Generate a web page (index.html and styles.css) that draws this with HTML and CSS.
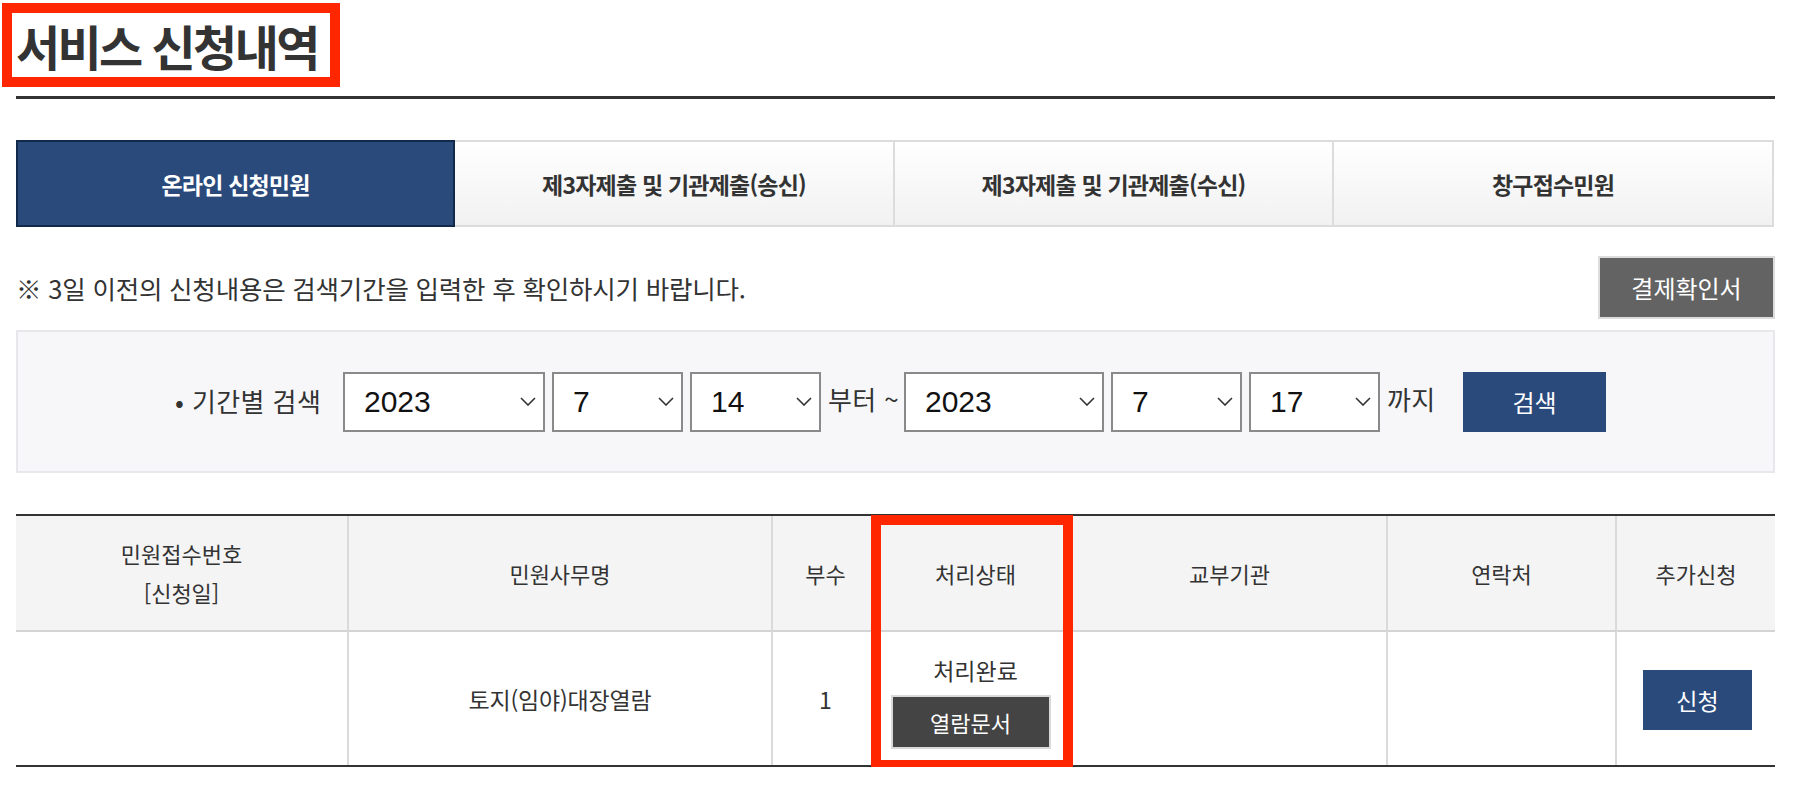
FILE: index.html
```html
<!DOCTYPE html>
<html lang="ko">
<head>
<meta charset="utf-8">
<title>서비스 신청내역</title>
<link rel="stylesheet" href="styles.css">
</head>
<body>
<div class="page">
  <header class="page-head">
    <h1 class="title">서비스 신청내역</h1>
  </header>

  <nav class="tabs">
    <a class="tab active">온라인 신청민원</a>
    <a class="tab">제3자제출 및 기관제출(송신)</a>
    <a class="tab">제3자제출 및 기관제출(수신)</a>
    <a class="tab">창구접수민원</a>
  </nav>

  <div class="notice-row">
    <p class="notice">※ 3일 이전의 신청내용은 검색기간을 입력한 후 확인하시기 바랍니다.</p>
    <button class="btn btn-gray">결제확인서</button>
  </div>

  <div class="search-box">
    <span class="search-label">• 기간별 검색</span>
    <div class="sel sel-year"><span class="sel-val">2023</span><svg class="chev" width="16" height="9" viewBox="0 0 16 9"><path d="M1 1 L8 8 L15 1" fill="none" stroke="#333" stroke-width="1.6"/></svg></div>
    <div class="sel sel-md"><span class="sel-val">7</span><svg class="chev" width="16" height="9" viewBox="0 0 16 9"><path d="M1 1 L8 8 L15 1" fill="none" stroke="#333" stroke-width="1.6"/></svg></div>
    <div class="sel sel-md"><span class="sel-val">14</span><svg class="chev" width="16" height="9" viewBox="0 0 16 9"><path d="M1 1 L8 8 L15 1" fill="none" stroke="#333" stroke-width="1.6"/></svg></div>
    <span class="search-text">부터 ~</span>
    <div class="sel sel-year2"><span class="sel-val">2023</span><svg class="chev" width="16" height="9" viewBox="0 0 16 9"><path d="M1 1 L8 8 L15 1" fill="none" stroke="#333" stroke-width="1.6"/></svg></div>
    <div class="sel sel-md"><span class="sel-val">7</span><svg class="chev" width="16" height="9" viewBox="0 0 16 9"><path d="M1 1 L8 8 L15 1" fill="none" stroke="#333" stroke-width="1.6"/></svg></div>
    <div class="sel sel-md"><span class="sel-val">17</span><svg class="chev" width="16" height="9" viewBox="0 0 16 9"><path d="M1 1 L8 8 L15 1" fill="none" stroke="#333" stroke-width="1.6"/></svg></div>
    <span class="search-text">까지</span>
    <button class="btn btn-navy btn-search">검색</button>
  </div>

  <div class="table-wrap">
    <table class="list">
      <colgroup>
        <col class="c1"><col class="c2"><col class="c3"><col class="c4"><col class="c5"><col class="c6"><col class="c7">
      </colgroup>
      <thead>
        <tr>
          <th>민원접수번호<br>[신청일]</th>
          <th>민원사무명</th>
          <th>부수</th>
          <th>처리상태</th>
          <th>교부기관</th>
          <th>연락처</th>
          <th>추가신청</th>
        </tr>
      </thead>
      <tbody>
        <tr>
          <td></td>
          <td class="name">토지(임야)대장열람</td>
          <td>1</td>
          <td>
            <div class="status">처리완료</div>
            <button class="btn btn-dark">열람문서</button>
          </td>
          <td></td>
          <td></td>
          <td><button class="btn btn-navy btn-apply">신청</button></td>
        </tr>
      </tbody>
    </table>
    <div class="highlight"></div>
  </div>
</div>
</body>
</html>
```

FILE: styles.css
```css
* { box-sizing: border-box; }

html, body {
  margin: 0;
  background: #fff;
}

body {
  font-family: "Noto Sans CJK KR", "Noto Sans", sans-serif;
  color: #333;
}

.page {
  width: 1796px;
  padding: 3px 21px 0 16px;
}

/* ---------- title ---------- */
.page-head {
  display: flex;
  padding-bottom: 9px;
  border-bottom: 3px solid #333;
}

.title {
  margin: 0 0 0 -14px;
  border: 10px solid #ff2600;
  padding: 0 12px 0 4px;
  font-size: 48px;
  font-weight: 700;
  line-height: 64px;
  letter-spacing: -2.6px;
  color: #333;
  white-space: nowrap;
}

/* ---------- tabs ---------- */
.tabs {
  display: grid;
  grid-template-columns: 439px 440px 439px 440px;
  margin-top: 41px;
  height: 87px;
}

.tab {
  display: flex;
  align-items: center;
  justify-content: center;
  border: 2px solid #dcdcdc;
  border-left: none;
  background: linear-gradient(#ffffff, #f1f1f1);
  font-size: 23px;
  font-weight: 700;
  letter-spacing: -0.8px;
  color: #333;
}

.tab.active {
  border: 2px solid #112a4c;
  background: #2a4a7c;
  color: #fff;
}

/* ---------- notice ---------- */
.notice-row {
  display: flex;
  align-items: center;
  justify-content: space-between;
  margin-top: 29px;
  height: 63px;
}

.notice {
  margin: 0;
  font-size: 25.5px;
  letter-spacing: -0.2px;
  color: #333;
}

.btn {
  font-family: "Noto Sans CJK KR", "Noto Sans", sans-serif;
  cursor: pointer;
  display: inline-flex;
  align-items: center;
  justify-content: center;
  padding: 0;
  color: #fff;
}

.btn-gray {
  width: 177px;
  height: 63px;
  background: #636363;
  border: 2px solid #dcdcdc;
  font-size: 24px;
}

/* ---------- search ---------- */
.search-box {
  display: flex;
  align-items: center;
  margin-top: 11px;
  height: 143px;
  padding-left: 157px;
  background: #f7f7f9;
  border: 2px solid #e8e8ec;
}

.search-label {
  flex: 0 0 168px;
  font-size: 26px;
  letter-spacing: 0.4px;
  color: #333;
  white-space: nowrap;
  margin-top: -3px;
}

.sel {
  display: flex;
  align-items: center;
  justify-content: space-between;
  flex: 0 0 auto;
  height: 60px;
  padding: 0 7px 0 19px;
  background: #fff;
  border: 2px solid #8a8a8a;
  margin-right: 7px;
}

.sel-year { width: 202px; }
.sel-year2 { width: 200px; }
.sel-md { width: 131px; }

.sel-val {
  font-family: "Liberation Sans", Arial, sans-serif;
  font-size: 30px;
  color: #111;
}

.chev { display: block; }

.search-text {
  flex: 0 0 76px;
  font-size: 26px;
  letter-spacing: 0.4px;
  color: #333;
  white-space: nowrap;
  margin-top: -6px;
}

.btn-navy {
  background: #2a4a7c;
  border: none;
}

.btn-search {
  width: 143px;
  height: 60px;
  font-size: 24px;
}

/* ---------- table ---------- */
.table-wrap {
  position: relative;
  margin-top: 41px;
}

.list {
  width: 1759px;
  table-layout: fixed;
  border-collapse: separate;
  border-spacing: 0;
  border-top: 2px solid #333;
  border-bottom: 2px solid #333;
}

.c1 { width: 333px; }
.c2 { width: 424px; }
.c3 { width: 107px; }
.c4 { width: 193px; }
.c5 { width: 315px; }
.c6 { width: 229px; }
.c7 { width: 158px; }

.list th,
.list td {
  padding: 0;
  text-align: center;
  vertical-align: middle;
  border-right: 2px solid #dadada;
  color: #333;
  font-weight: 400;
}

.list th:last-child,
.list td:last-child {
  border-right: none;
}

.list th {
  height: 116px;
  background: #f4f4f4;
  border-bottom: 2px solid #d4d4d4;
  font-size: 22px;
  line-height: 39px;
}

.list td {
  height: 133px;
  font-size: 23px;
  line-height: 30px;
}

.list td.name {
  letter-spacing: -0.2px;
}

.status {
  line-height: 30px;
  margin-top: 6px;
}

.btn-dark {
  width: 160px;
  height: 54px;
  margin-top: 10px;
  margin-left: -10px;
  background: #444;
  border: 2px solid #d9d9d9;
  font-size: 22px;
}

.btn-apply {
  width: 109px;
  height: 60px;
  margin-left: 3px;
  margin-top: 2px;
  font-size: 23px;
}

.highlight {
  position: absolute;
  left: 855px;
  top: 1px;
  width: 202px;
  height: 255px;
  border: 10px solid #ff2600;
  pointer-events: none;
}
```
